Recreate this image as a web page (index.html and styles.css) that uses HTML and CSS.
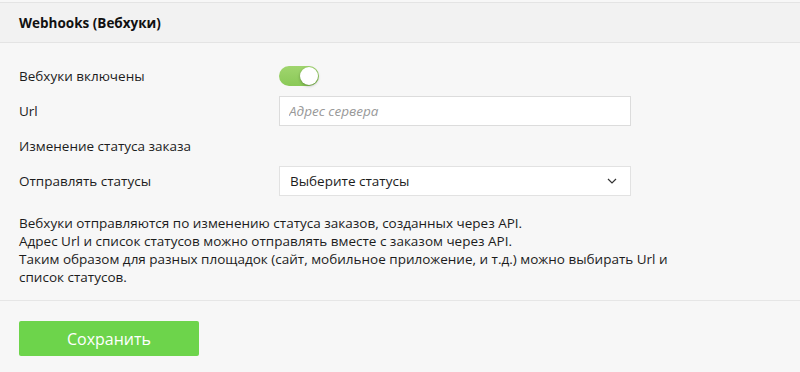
FILE: index.html
```html
<!DOCTYPE html>
<html lang="ru">
<head>
<meta charset="utf-8">
<link rel="stylesheet" href="styles.css">
</head>
<body>
<div class="panel">
  <div class="panel-head">Webhooks (Вебхуки)</div>
  <div class="panel-body">
    <div class="row row-short">
      <div class="label">Вебхуки включены</div>
      <div class="control"><span class="toggle"><span class="knob"></span></span></div>
    </div>
    <div class="row">
      <div class="label">Url</div>
      <div class="control"><input class="input" type="text" placeholder="Адрес сервера"></div>
    </div>
    <div class="row row-short">
      <div class="label">Изменение статуса заказа</div>
    </div>
    <div class="row">
      <div class="label">Отправлять статусы</div>
      <div class="control">
        <div class="select">
          <span>Выберите статусы</span>
          <svg class="chev" width="10" height="6" viewBox="0 0 10 6"><path d="M1 1 L5 5 L9 1" fill="none" stroke="#333" stroke-width="1.2"/></svg>
        </div>
      </div>
    </div>
    <p class="note">Вебхуки отправляются по изменению статуса заказов, созданных через API.<br>Адрес Url и список статусов можно отправлять вместе с заказом через API.<br>Таким образом для разных площадок (сайт, мобильное приложение, и т.д.) можно выбирать Url и<br>список статусов.</p>
  </div>
  <div class="panel-foot">
    <button class="btn">Сохранить</button>
  </div>
</div>
</body>
</html>
```

FILE: styles.css
```css
* { box-sizing: border-box; }
html, body { margin: 0; padding: 0; background: #f7f7f7; }
body {
  font-family: "Open Sans", "Liberation Sans", sans-serif;
  font-size: 13.5px;
  color: #1c1c1c;
  padding-top: 2px;
}
.panel-head {
  background: #f2f2f2;
  border-top: 1px solid #e4e4e4;
  border-bottom: 1px solid #e4e4e4;
  height: 41px;
  padding: 0 19px;
  display: flex;
  align-items: center;
  font-weight: 700;
  font-size: 13.5px;
  color: #111;
}
.panel-body {
  padding: 23px 19px 0;
  border-bottom: 1px solid #e6e6e6;
}
.row {
  display: flex;
  align-items: center;
  height: 30px;
  margin-bottom: 10px;
}
.row-short { height: 20px; }
.label {
  width: 260px;
  flex: none;
}
.control { width: 352px; }
.toggle {
  display: block;
  width: 40px;
  height: 20px;
  border-radius: 10px;
  background: linear-gradient(#a0d56e, #8ac957);
  position: relative;
}
.knob {
  position: absolute;
  right: 1px;
  top: 1px;
  width: 18px;
  height: 18px;
  border-radius: 50%;
  background: #fff;
  box-shadow: 0 1px 3px rgba(0,0,0,0.3);
}
.input {
  display: block;
  width: 352px;
  height: 30px;
  border: 1px solid #dcdcdc;
  background: #fff;
  padding: 0 9px;
  font-family: "Open Sans", "Liberation Sans", sans-serif;
  font-size: 13.5px;
  outline: none;
}
.input::placeholder { color: #999; font-style: italic; }
.select {
  height: 30px;
  border: 1px solid #e2e2e2;
  background: #fff;
  display: flex;
  align-items: center;
  justify-content: space-between;
  padding: 0 13px 0 10px;
}
.chev { display: block; }
.note {
  margin: 18px 0 0;
  padding-bottom: 14px;
  line-height: 18px;
}
.panel-foot { padding: 20px 19px; }
.btn {
  display: block;
  width: 180px;
  height: 35px;
  border: none;
  border-radius: 2px;
  background: #6dd44b;
  color: #fff;
  font-family: "Open Sans", "Liberation Sans", sans-serif;
  font-size: 16px;
  font-weight: 400;
}
```
